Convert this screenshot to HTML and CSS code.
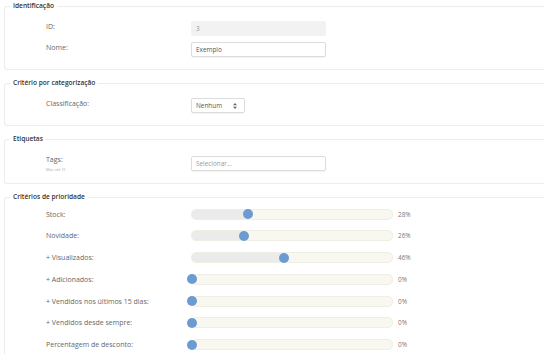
FILE: index.html
```html
<!DOCTYPE html>
<html lang="pt">
<head>
    <meta charset="UTF-8">
    <title>Critérios</title>
    <link rel="stylesheet" href="styles.css">
</head>
<body>
    <fieldset class="group">
        <legend>Identificação</legend>
        <div class="rows">
            <div class="row">
                <label>ID:</label>
                <div class="field readonly">3</div>
            </div>
            <div class="row">
                <label>Nome:</label>
                <div class="field">Exemplo</div>
            </div>
        </div>
    </fieldset>

    <fieldset class="group">
        <legend>Critério por categorização</legend>
        <div class="rows">
            <div class="row">
                <label>Classificação:</label>
                <div class="field select">
                    <span>Nenhum</span>
                    <svg width="4" height="6" viewBox="0 0 4 6"><path d="M2 0L4 2.2H0z M2 6L4 3.8H0z" fill="#666"/></svg>
                </div>
            </div>
        </div>
    </fieldset>

    <fieldset class="group">
        <legend>Etiquetas</legend>
        <div class="rows">
            <div class="row tags">
                <label>Tags:<small>Máx. até 10</small></label>
                <div class="field placeholder">Selecionar...</div>
            </div>
        </div>
    </fieldset>

    <fieldset class="group">
        <legend>Critérios de prioridade</legend>
        <div class="rows sliders">
            <div class="row">
                <label>Stock:</label>
                <div class="slider" style="--v: 28%"><span class="thumb"></span></div>
                <span class="pct">28%</span>
            </div>
            <div class="row">
                <label>Novidade:</label>
                <div class="slider" style="--v: 26%"><span class="thumb"></span></div>
                <span class="pct">26%</span>
            </div>
            <div class="row">
                <label>+ Visualizados:</label>
                <div class="slider" style="--v: 46%"><span class="thumb"></span></div>
                <span class="pct">46%</span>
            </div>
            <div class="row">
                <label>+ Adicionados:</label>
                <div class="slider" style="--v: 0%"><span class="thumb"></span></div>
                <span class="pct">0%</span>
            </div>
            <div class="row">
                <label>+ Vendidos nos últimos 15 dias:</label>
                <div class="slider" style="--v: 0%"><span class="thumb"></span></div>
                <span class="pct">0%</span>
            </div>
            <div class="row">
                <label>+ Vendidos desde sempre:</label>
                <div class="slider" style="--v: 0%"><span class="thumb"></span></div>
                <span class="pct">0%</span>
            </div>
            <div class="row">
                <label>Percentagem de desconto:</label>
                <div class="slider" style="--v: 0%"><span class="thumb"></span></div>
                <span class="pct">0%</span>
            </div>
        </div>
    </fieldset>
</body>
</html>
```

FILE: styles.css
```css
body {
    margin: 0;
    padding: 0;
    font-family: "Open Sans", "DejaVu Sans", sans-serif;
    color: #666;
    background: #fff;
    overflow: hidden;
}
.group {
    margin: 0 0 8px 4px;
    padding: 0;
    border: 1px solid #ececec;
    border-right: none;
    border-radius: 3px 0 0 3px;
}
.group:first-child {
    margin-top: 1px;
}
.group legend {
    margin-left: 5px;
    padding: 0 3px;
    font-size: 6.6px;
    line-height: 10px;
    font-weight: 600;
    color: #333;
}
.rows {
    display: flex;
    flex-direction: column;
    gap: 6px;
    padding: 10px 0 12px 41px;
}
.row {
    display: grid;
    grid-template-columns: 145px 135px;
    align-items: center;
    height: 15px;
    font-size: 7px;
}
.row label {
    display: flex;
    flex-direction: column;
    align-self: start;
    padding-top: 1px;
}
.row label small {
    font-size: 3.6px;
    color: #aaa;
    margin-top: 3px;
}
.field {
    box-sizing: border-box;
    height: 15px;
    border: 1px solid #dcdcdc;
    border-radius: 2px;
    box-shadow: 0 1px 1px rgba(0, 0, 0, 0.05);
    padding: 0 4px;
    font-size: 6.4px;
    line-height: 13px;
    color: #555;
}
.field.readonly {
    background: #f2f2f2;
    border-color: #f2f2f2;
    box-shadow: none;
    color: #999;
}
.field.placeholder {
    color: #999;
}
.field.select {
    width: 54px;
    display: flex;
    justify-content: space-between;
    align-items: center;
    padding-right: 7px;
}
.tags {
    height: 17px;
}
.sliders {
    gap: 6.8px;
    padding-top: 4.5px;
    padding-bottom: 6px;
}
.sliders .row label {
    align-self: center;
    padding-top: 0;
}
.sliders .row {
    grid-template-columns: 145px 202px auto;
}
.slider {
    position: relative;
    box-sizing: border-box;
    height: 11px;
    border: 1px solid #eeeee4;
    border-radius: 5px;
    background: linear-gradient(to right, #ebebeb var(--v), #f8f8f1 var(--v));
}
.thumb {
    position: absolute;
    top: 0;
    left: calc(var(--v) - 5px);
    width: 10px;
    height: 10px;
    margin-top: -0.5px;
    border-radius: 50%;
    background: #6b9bd0;
}
.pct {
    padding-left: 5px;
    font-size: 6.4px;
    color: #777;
}
```
